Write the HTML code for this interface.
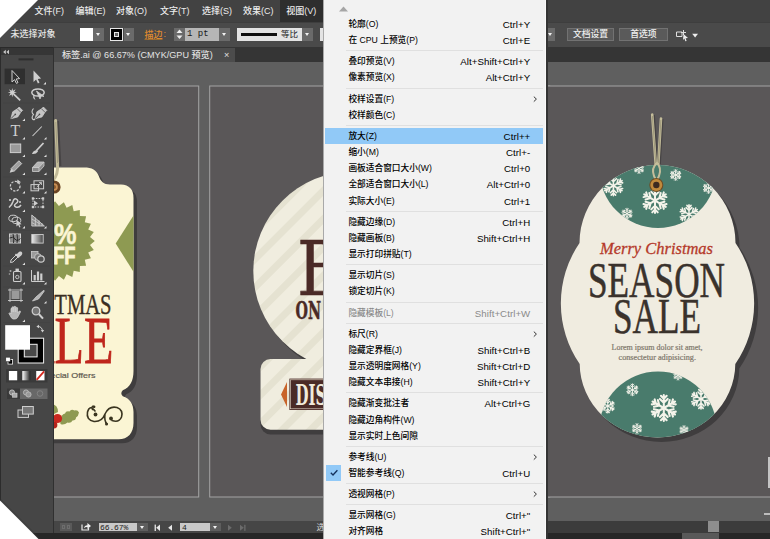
<!DOCTYPE html>
<html lang="zh-CN">
<head>
<meta charset="utf-8">
<title>Illustrator - 视图菜单</title>
<style>
*{margin:0;padding:0;box-sizing:border-box}
html,body{width:770px;height:539px;overflow:hidden;background:#5a5758}
body{position:relative;font-family:"Liberation Sans","Noto Sans CJK SC",sans-serif;font-size:9px;color:#e6e6e6}
.abs{position:absolute}
#art{position:absolute;left:0;top:0;width:770px;height:539px}
/* chrome */
#menubar{position:absolute;left:0;top:0;width:770px;height:22px;background:#424242}
#menubar span{position:absolute;top:4px;font-size:9px;line-height:14px;color:#ececec;white-space:nowrap;font-weight:500}
#menubar .sel{position:absolute;left:280px;top:0;width:43px;height:22px;background:#2e2e2e}
#ctrl{position:absolute;left:0;top:22px;width:770px;height:25px;background:#4a4a4a}
.dd{background:#6a6a6a}
.dd::after{content:"";position:absolute;left:50%;top:5px;margin-left:-2.6px;border-left:2.6px solid transparent;border-right:2.6px solid transparent;border-top:3.4px solid #f2f2f2}
.dd2{background:#5e5e5e}
.dd2::after{content:"";position:absolute;left:50%;top:3.4px;margin-left:-2.8px;border-left:2.8px solid transparent;border-right:2.8px solid transparent;border-top:3.6px solid #f4f4f4}
.btn{background:#5a5a5a;border:1px solid #727272;color:#f0f0f0;font-size:8.8px;line-height:10.5px;text-align:center;white-space:nowrap;font-weight:500}
#tabbar{position:absolute;left:0;top:47px;width:770px;height:15px;background:#353535}
#tab{position:absolute;left:54px;top:1px;width:180.5px;height:14px;background:#4c4c4c;font-size:9.1px;line-height:15px;color:#e4e4e4;white-space:nowrap;font-weight:500}
#tools{position:absolute;left:0;top:47px;width:54.4px;height:486px;background:#464646;border-right:1.6px solid #303030}
#toolhead{position:absolute;left:0;top:0;width:52.8px;height:8px;background:#363636}
#status{position:absolute;left:54.4px;top:520.5px;width:716px;height:12px;background:#464646}
#bottom{position:absolute;left:0;top:532.5px;width:770px;height:7px;background:#272727}
/* dropdown */
#menu{position:absolute;left:322.5px;top:0;width:222.1px;height:539px;background:#f2f2f2;border-left:1px solid #a9a9a9;box-shadow:1px 0 0 #fafafa,3px 0 0 #343434;color:#000}
#menu .it{position:absolute;left:1.5px;width:218.4px;height:16.2px;font-size:8.7px;line-height:17.2px;white-space:nowrap}
#menu .it b{position:absolute;left:23.4px;top:0;font-weight:500}
#menu .it i{position:absolute;right:13.1px;top:0;font-style:normal;font-size:9.7px;letter-spacing:0.05px}
#menu .sep{position:absolute;left:22.5px;width:197.4px;height:1px;background:#e0e0e0}
#menu .dis{color:#8a8a8a}
#menu .hl{background:#91c9f7}
#menu .chk{position:absolute;left:0.5px;top:0;width:15.6px;height:16.2px;background:#91c9f7}
</style>
</head>
<body>
<svg id="art" viewBox="0 0 770 539" width="770" height="539">
<rect x="0" y="0" width="770" height="539" fill="#5f5f5f"/>
<rect x="-10.5" y="86" width="209.2" height="411" fill="#5a5758" stroke="#a4a4a4" stroke-width="1"/>
<rect x="209.7" y="86" width="340" height="411" fill="#5a5758" stroke="#a4a4a4" stroke-width="1"/>
<rect x="530.5" y="86" width="260" height="411" fill="#5a5758" stroke="#a4a4a4" stroke-width="1"/>
<defs>
<pattern id="stripe" width="20" height="20" patternUnits="userSpaceOnUse" patternTransform="rotate(-45)">
<rect x="0" y="0" width="20" height="20" fill="#f0eddf"/><rect x="0" y="0" width="20" height="7" fill="#e5e2d1"/>
</pattern>
<g id="flake" stroke="#f4f3ea" stroke-width="1.6" stroke-linecap="round" fill="none">
<g id="arm"><path d="M0 0 V-10 M0 -4 L-3 -7 M0 -4 L3 -7 M0 -7 L-2.2 -9.4 M0 -7 L2.2 -9.4"/></g>
<use href="#arm" transform="rotate(60)"/><use href="#arm" transform="rotate(120)"/><use href="#arm" transform="rotate(180)"/><use href="#arm" transform="rotate(240)"/><use href="#arm" transform="rotate(300)"/>
</g>
<clipPath id="gtop"><circle cx="657.5" cy="243" r="78"/></clipPath>
<clipPath id="gtop2"><circle cx="658" cy="169.5" r="58.5"/></clipPath>
<clipPath id="gbot"><ellipse cx="657.5" cy="363.5" rx="78" ry="74"/></clipPath>
<clipPath id="gbot2"><circle cx="658" cy="430.5" r="59"/></clipPath>
</defs>
<path d="M40 167.5 H84 C92 167.5 96.5 170 98.8 176 C100.8 181.5 103.5 184.5 110 184.5 H121 Q133.5 185 133.5 198 V371 C133.5 381 130 387.5 122.8 390.3 Q119.8 393.3 122.8 396.2 C130 398.5 133.5 404 133.5 412 V423 C133.5 433 128 439.3 118.5 439.3 H40 Z" fill="#3f3d3e" transform="translate(3.5,4)"/>
<path d="M40 167.5 H84 C92 167.5 96.5 170 98.8 176 C100.8 181.5 103.5 184.5 110 184.5 H121 Q133.5 185 133.5 198 V371 C133.5 381 130 387.5 122.8 390.3 Q119.8 393.3 122.8 396.2 C130 398.5 133.5 404 133.5 412 V423 C133.5 433 128 439.3 118.5 439.3 H40 Z" fill="#fbf5d4"/>
<path d="M58 121 L60.4 166" stroke="#474445" stroke-width="2" fill="none"/>
<path d="M55.6 120.5 L57.4 163 Q58.7 175 52.5 181" stroke="#c2bb98" stroke-width="3" fill="none" stroke-linecap="round"/>
<path d="M55.8 122 L57.6 163" stroke="#9a947a" stroke-width="0.8" fill="none"/>
<circle cx="54" cy="187" r="6.6" fill="#6b4423"/><circle cx="54" cy="187" r="3.8" fill="#c98f55"/><circle cx="54" cy="187" r="2" fill="#8a5a2c"/>
<polygon points="94.8,241.0 90.0,244.9 93.8,249.9 88.2,252.6 90.9,258.3 84.8,259.7 86.1,265.8 79.9,265.9 79.8,272.1 73.7,270.8 72.3,276.9 66.6,274.2 63.9,279.8 58.9,276.0 55.0,280.8 51.1,276.0 46.1,279.8 43.4,274.2 37.7,276.9 36.3,270.8 30.2,272.1 30.1,265.9 23.9,265.8 25.2,259.7 19.1,258.3 21.8,252.6 16.2,249.9 20.0,244.9 15.2,241.0 20.0,237.1 16.2,232.1 21.8,229.4 19.1,223.7 25.2,222.3 23.9,216.2 30.1,216.1 30.2,209.9 36.3,211.2 37.7,205.1 43.4,207.8 46.1,202.2 51.1,206.0 55.0,201.2 58.9,206.0 63.9,202.2 66.6,207.8 72.3,205.1 73.7,211.2 79.8,209.9 79.9,216.1 86.1,216.2 84.8,222.3 90.9,223.7 88.2,229.4 93.8,232.1 90.0,237.1" fill="#8e9a52"/>
<polygon points="133.5,215.5 115.7,243.6 133.5,271.7" fill="#8e9a52"/>
<text x="54" y="243.8" font-family="Liberation Sans, sans-serif" font-weight="bold" font-size="29" fill="#fbf5d4" stroke="#fbf5d4" stroke-width="0.5" textLength="22.5" lengthAdjust="spacingAndGlyphs">%</text>
<text x="39" y="263.5" font-family="Liberation Sans, sans-serif" font-weight="bold" font-size="24.5" fill="#fbf5d4" stroke="#fbf5d4" stroke-width="0.9" textLength="36.5" lengthAdjust="spacingAndGlyphs">OFF</text>
<text x="42.8" y="314.3" font-family="Liberation Serif, serif" font-size="28.4" fill="#3a2e22" stroke="#3a2e22" stroke-width="0.35" textLength="68.8" lengthAdjust="spacingAndGlyphs">STMAS</text>
<text x="19.7" y="363.4" font-family="Liberation Serif, serif" font-size="68" fill="#bf261c" stroke="#bf261c" stroke-width="0.8" textLength="93.7" lengthAdjust="spacingAndGlyphs">ALE</text>
<text x="39.5" y="377.5" font-family="Liberation Sans, sans-serif" font-size="8" fill="#5f5a50" stroke="#5f5a50" stroke-width="0.2" textLength="56" lengthAdjust="spacingAndGlyphs">Special Offers</text>
<path d="M60 421 Q61 414 65 413.5 Q66 410.5 69.5 411.5 Q71 408.8 74.5 410.5 Q77.5 409.5 79 412.5 Q78.5 416 76 417.5 Q76 420.5 72.5 420.5 Q71 423.5 67.5 422.5 Q64 425.5 60.5 424 Z" fill="#8e9a52"/>
<path d="M52 404 Q58 405 58 412 L54 414 Z" fill="#8e9a52"/>
<circle cx="57.5" cy="418.5" r="4.6" fill="#c9281e"/><circle cx="54" cy="425" r="3.4" fill="#b5231a"/>
<path d="M94.5 407 Q91 405 92.5 409.5 M95 411 Q90 404 87.5 412 Q86 420 94 421.5 Q102 422 105 414 Q109 405.5 117 407.5 Q123.5 410 121.5 417 Q119 423 112 420.5 M105 414 Q104 421 107 424" fill="none" stroke="#3a3520" stroke-width="1.6" stroke-linecap="round"/>
<circle cx="95.5" cy="414.5" r="1.9" fill="#3a3520"/><circle cx="111" cy="418.5" r="1.9" fill="#3a3520"/><circle cx="106.5" cy="424" r="1.5" fill="#3a3520"/><circle cx="94" cy="406.8" r="1.3" fill="#3a3520"/>
<circle cx="356" cy="275" r="99.5" fill="#3f3d3e"/>
<rect x="260.5" y="363" width="200" height="71.5" rx="10" fill="#3f3d3e"/>
<circle cx="352.8" cy="271" r="99.5" fill="url(#stripe)"/>
<rect x="260.5" y="359" width="200" height="70.8" rx="10" fill="url(#stripe)"/>
<text x="297" y="294.6" font-family="DejaVu Serif, Liberation Serif, serif" font-size="75.4" fill="#4a2a26" stroke="#4a2a26" stroke-width="0.6" textLength="49" lengthAdjust="spacingAndGlyphs">B</text>
<text x="295.5" y="318.6" font-family="DejaVu Serif, Liberation Serif, serif" font-weight="bold" font-size="24.6" fill="#4a2a26" stroke="#4a2a26" stroke-width="0.5" textLength="25.5" lengthAdjust="spacingAndGlyphs">ON</text>
<rect x="289.4" y="378.6" width="120" height="31.4" fill="#4a2a26"/>
<rect x="290.6" y="379.8" width="120" height="29" fill="none" stroke="#e9e2cf" stroke-width="0.6"/>
<polygon points="281,394.6 287,382 287,407" fill="#c8642a"/>
<text x="295.5" y="405" font-family="DejaVu Serif, Liberation Serif, serif" font-weight="bold" font-size="28.8" fill="#f0eadb" textLength="94" lengthAdjust="spacingAndGlyphs">DISCOUNT</text>
<path d="M657.5 165 A78 78 0 0 0 579.5 243 A107 107 0 0 0 579.7 364 A78 74 0 0 0 657.5 437.5 A78 74 0 0 0 735.3 364 A107 107 0 0 0 735.5 243 A78 78 0 0 0 657.5 165 Z" fill="#3f3d3e" transform="translate(4,4.5)"/>
<path d="M657.5 165 A78 78 0 0 0 579.5 243 A107 107 0 0 0 579.7 364 A78 74 0 0 0 657.5 437.5 A78 74 0 0 0 735.3 364 A107 107 0 0 0 735.5 243 A78 78 0 0 0 657.5 165 Z" fill="#f0ece0"/>
<g clip-path="url(#gtop)"><g clip-path="url(#gtop2)"><rect x="560" y="150" width="200" height="100" fill="#497b6c"/>
<use href="#flake" transform="translate(639,168.6) scale(0.50)"/>
<use href="#flake" transform="translate(675.7,175) scale(0.55)"/>
<use href="#flake" transform="translate(613.4,185.7) scale(1.00)"/>
<use href="#flake" transform="translate(655,200.6) scale(1.25)"/>
<use href="#flake" transform="translate(627,213.7) scale(0.55)"/>
<use href="#flake" transform="translate(689,214.3) scale(0.95)"/>
<use href="#flake" transform="translate(708.6,188) scale(0.55)"/>
</g></g>
<g clip-path="url(#gbot)"><g clip-path="url(#gbot2)"><rect x="560" y="360" width="200" height="100" fill="#497b6c"/>
<use href="#flake" transform="translate(632.4,389.8) scale(0.60)"/>
<use href="#flake" transform="translate(663.8,408) scale(1.30)"/>
<use href="#flake" transform="translate(701,399) scale(1.00)"/>
<use href="#flake" transform="translate(607.8,406) scale(0.70)"/>
<use href="#flake" transform="translate(678,375.7) scale(0.45)"/>
<use href="#flake" transform="translate(637,428.5) scale(0.50)"/>
<use href="#flake" transform="translate(684,430) scale(0.45)"/>
</g></g>
<path d="M654 115 L657.5 164 M662.6 119 L660 164" stroke="#474445" stroke-width="1.8" fill="none"/>
<path d="M652.2 114.5 L655.7 164 M661 118.5 L658.3 164" stroke="#c4bd9a" stroke-width="2.6" fill="none" stroke-linecap="round"/>
<path d="M652.4 116 L655.8 163 M660.9 120 L658.3 163" stroke="#8f896f" stroke-width="0.7" fill="none"/>
<path d="M657 163 Q651 168 654 176 L656.5 181 L659 176 Q662 168 657 163 Z" fill="none" stroke="#c4bd9a" stroke-width="2"/>
<circle cx="656.3" cy="185" r="7" fill="#6e4a22"/><circle cx="656.3" cy="185" r="6" fill="#c08a3c"/><circle cx="656.3" cy="185" r="3.2" fill="#3c2a20"/>
<text x="600" y="254" font-family="Liberation Serif, serif" font-style="italic" font-size="17.5" fill="#b5392a" stroke="#b5392a" stroke-width="0.3" textLength="113" lengthAdjust="spacingAndGlyphs">Merry Christmas</text>
<text x="588" y="297.2" font-family="Liberation Serif, serif" font-size="50.6" fill="#3a322c" stroke="#3a322c" stroke-width="0.5" textLength="137" lengthAdjust="spacingAndGlyphs">SEASON</text>
<text x="613" y="333.3" font-family="Liberation Serif, serif" font-size="50" fill="#3a322c" stroke="#3a322c" stroke-width="0.5" textLength="88" lengthAdjust="spacingAndGlyphs">SALE</text>
<text x="611.5" y="350.3" font-family="Liberation Serif, serif" font-size="7.8" fill="#80786c" stroke="#80786c" stroke-width="0.2" textLength="91" lengthAdjust="spacingAndGlyphs">Lorem ipsum dolor sit amet,</text>
<text x="618.5" y="360.3" font-family="Liberation Serif, serif" font-size="7.8" fill="#80786c" stroke="#80786c" stroke-width="0.2" textLength="77.5" lengthAdjust="spacingAndGlyphs">consectetur adipisicing.</text>
<rect x="768" y="457" width="2" height="31" fill="#c4c4c4"/>
<rect x="764" y="513" width="6" height="2" fill="#bdbdbd"/>
</svg>

<div id="menubar">
  <div class="sel"></div>
  <span style="left:34.5px">文件(F)</span>
  <span style="left:75.5px">编辑(E)</span>
  <span style="left:116px">对象(O)</span>
  <span style="left:160px">文字(T)</span>
  <span style="left:202px">选择(S)</span>
  <span style="left:243px">效果(C)</span>
  <span style="left:286.2px">视图(V)</span>
</div>
<div id="ctrl">
<div class="abs" style="left:0;top:0;width:770px;height:1px;background:#3e3e3e"></div>
<span class="abs" style="left:10.5px;top:5.8px;font-size:9px;line-height:12px;color:#e4e4e4;font-weight:500;white-space:nowrap">未选择对象</span>
<div class="abs" style="left:80.4px;top:6.2px;width:13px;height:12.8px;background:#fff"></div>
<div class="abs dd" style="left:93.4px;top:6.2px;width:10.2px;height:12.8px"></div>
<div class="abs" style="left:110px;top:6.2px;width:12.8px;height:12.8px;background:#000;border:1px solid #e8e8e8"><div class="abs" style="left:3.2px;top:3.2px;width:4.4px;height:4.4px;border:1px solid #e8e8e8;background:#666"></div></div>
<div class="abs dd" style="left:123.6px;top:6.2px;width:10.6px;height:12.8px"></div>
<span class="abs" style="left:144.5px;top:6.5px;font-size:9px;line-height:12px;color:#e08a2e;font-weight:500;white-space:nowrap;text-decoration:underline;text-decoration-color:#9a6a30">描边</span><span class="abs" style="left:163.5px;top:6px;font-size:9px;line-height:12px;color:#e08a2e">:</span>
<div class="abs" style="left:174px;top:6.2px;width:11px;height:12.8px;background:#6a6a6a"><svg class="abs" style="left:2px;top:1.2px" width="7" height="11"><polygon points="3.5,0.5 6.5,4 0.5,4" fill="#eee"/><polygon points="0.5,6.5 6.5,6.5 3.5,10" fill="#eee"/></svg></div>
<div class="abs" style="left:185px;top:6.2px;width:34px;height:12.8px;background:#b6b6b6;color:#1a1a1a;font-family:'Liberation Mono',monospace;font-size:9px;line-height:12.5px;padding-left:2px;white-space:nowrap">1 pt</div>
<div class="abs dd" style="left:219px;top:6.2px;width:11px;height:12.8px"></div>
<div class="abs" style="left:236.6px;top:6.2px;width:65.4px;height:12.8px;background:#e4e4e4"><div class="abs" style="left:4px;top:5.2px;width:36.5px;height:2.2px;background:#111"></div><span class="abs" style="left:44.5px;top:0;font-size:8.5px;line-height:13px;color:#222;white-space:nowrap">等比</span></div>
<div class="abs dd" style="left:302px;top:6.2px;width:11px;height:12.8px"></div>
<div class="abs" style="left:319.7px;top:6.2px;width:20px;height:12.8px;background:#e4e4e4"></div>
<div class="abs dd" style="left:545.5px;top:6.2px;width:9.6px;height:12.8px"></div>
<div class="abs btn" style="left:567px;top:6.2px;width:47px;height:12.8px">文档设置</div>
<div class="abs btn" style="left:619px;top:6.2px;width:48.8px;height:12.8px">首选项</div>
<svg class="abs" style="left:675px;top:6.5px" width="26" height="13"><path d="M1.5 3 H7 V7.5 H1.5 Z" fill="none" stroke="#ddd" stroke-width="1"/><path d="M8.5 1 V6 M6 3.5 H11" stroke="#ddd" stroke-width="1" fill="none"/><polygon points="8.5,5 13,9 10.6,9.2 11.6,12 10.4,12.3 9.4,9.6 8,11" fill="#eee"/><polygon points="17.2,4.8 23,4.8 20.1,8.4" fill="#eee"/></svg>

</div>
<div id="tabbar"><div id="tab"><span class="abs" style="left:8px;top:0">标签.ai @ 66.67% (CMYK/GPU 预览)</span><span class="abs" style="left:170px;top:0">×</span></div></div>
<div id="tools"><div id="toolhead"></div><div class="abs" style="left:0;top:0;width:1px;height:486px;background:#2c2c2c"></div><div class="abs" style="left:0;top:0;width:52.8px;height:1.2px;background:#2a2a2a"></div>
<svg class="abs" style="left:0;top:0" width="54" height="473" viewBox="0 47 54 473">
<polygon points="3.2,52 5.8,49.8 5.8,54.2" fill="#c8c8c8"/><polygon points="6.4,52 9,49.8 9,54.2" fill="#c8c8c8"/>
<rect x="18.5" y="58.4" width="15" height="2" fill="#2e2e2e"/>
<rect x="4.6" y="68.6" width="20.4" height="15.6" fill="#2f2f2f"/>
<path d="M12 70.5 V82 L14.6 79.6 L16.4 83.4 L18 82.6 L16.2 79 L19.6 78.6 Z" fill="#2f2f2f" stroke="#cecece" stroke-width="1"/>
<path d="M33.5 70.5 V82 L36.1 79.6 L37.9 83.4 L39.5 82.6 L37.7 79 L41.1 78.6 Z" fill="#cecece"/>
<polygon points="46,81.9 46,84.5 43.4,84.5" fill="#e0e0e0"/>
<path d="M14 94.3 L20.2 100.4" stroke="#cecece" stroke-width="1.7" fill="none"/><polygon points="12.3,88.0 13.0,90.8 15.6,89.3 14.1,91.9 16.9,92.6 14.1,93.3 15.6,95.9 13.0,94.4 12.3,97.2 11.6,94.4 9.0,95.9 10.5,93.3 7.7,92.6 10.5,91.9 9.0,89.3 11.6,90.8" fill="#cecece"/>
<ellipse cx="38" cy="92.5" rx="6.2" ry="3.6" fill="none" stroke="#cecece" stroke-width="1.5"/><path d="M34 95 Q32.5 98 35 99.5 M36.5 91 L40 99 L41.2 96 L44 96.4 Z" fill="#cecece" stroke="#cecece" stroke-width="0.8"/>
<rect x="3" y="102.5" width="47" height="1" fill="#434343"/>
<g transform="translate(15.8,113.8) rotate(45)"><path d="M-2.4 -7.2 H2.4 V-4.6 L3.6 0.8 L0 7 L-3.6 0.8 L-2.4 -4.6 Z" fill="#c4c4c4" stroke="#cecece" stroke-width="0.7"/><path d="M-2.4 -4.6 H2.4" stroke="#555" stroke-width="0.8"/><path d="M0 7 V1.6" stroke="#4a4a4a" stroke-width="0.9"/><circle cx="0" cy="0.8" r="0.9" fill="#4a4a4a"/></g>
<polygon points="25,118.4 25,121 22.4,121" fill="#e0e0e0"/>
<g transform="translate(40,113.8) rotate(45)"><path d="M-2.4 -7.2 H2.4 V-4.6 L3.6 0.8 L0 7 L-3.6 0.8 L-2.4 -4.6 Z" fill="#c4c4c4" stroke="#cecece" stroke-width="0.7"/><path d="M-2.4 -4.6 H2.4" stroke="#555" stroke-width="0.8"/><path d="M0 7 V1.6" stroke="#4a4a4a" stroke-width="0.9"/><circle cx="0" cy="0.8" r="0.9" fill="#4a4a4a"/></g>
<path d="M33.5 108.5 Q30.5 112 33.5 114.5 Q31 117.5 33 119.5 Q34 120 35 119" fill="none" stroke="#cecece" stroke-width="1.1"/>
<text x="10.6" y="136.4" font-family="Liberation Serif, serif" font-size="15.8" fill="#cecece">T</text>
<polygon points="25,136.9 25,139.5 22.4,139.5" fill="#e0e0e0"/>
<path d="M32.5 136 L41.8 126.5" stroke="#cecece" stroke-width="1.05" fill="none"/>
<polygon points="46.5,136.9 46.5,139.5 43.9,139.5" fill="#e0e0e0"/>
<rect x="10.3" y="144" width="10.4" height="8.6" fill="#9a9a9a" stroke="#cecece" stroke-width="1"/>
<polygon points="25,154.4 25,157 22.4,157" fill="#e0e0e0"/>
<path d="M43.5 143 L36.5 150.5" stroke="#cecece" stroke-width="1.8" fill="none"/><path d="M36.8 150 Q33 150.5 32 154 Q36 154.5 38 151.5 Z" fill="#cecece"/>
<polygon points="46.5,154.4 46.5,157 43.9,157" fill="#e0e0e0"/>
<g transform="translate(15,167.5) rotate(45)"><rect x="-2" y="-7.5" width="4" height="11" fill="#a0a0a0" stroke="#cecece" stroke-width="0.9"/><polygon points="-2,3.5 2,3.5 0,7.5" fill="#cecece"/></g>
<polygon points="25,172.4 25,175 22.4,175" fill="#e0e0e0"/>
<path d="M32.5 167.5 L37.5 162 H44 L39 167.5 Z" fill="#b5b5b5" stroke="#cecece" stroke-width="0.8"/><path d="M32.5 167.5 H39 V171.5 H32.5 Z M39 167.5 L44 162 V166 L39 171.5" fill="#8a8a8a" stroke="#cecece" stroke-width="0.8"/>
<polygon points="46.5,172.4 46.5,175 43.9,175" fill="#e0e0e0"/>
<rect x="3" y="176.5" width="47" height="1" fill="#434343"/>
<circle cx="15.2" cy="186.2" r="4.8" fill="none" stroke="#cecece" stroke-width="1.3" stroke-dasharray="2.2 1.4"/><polygon points="17.4,179.6 21,182.2 17,183.6" fill="#cecece"/>
<polygon points="25,190.9 25,193.5 22.4,193.5" fill="#e0e0e0"/>
<rect x="31" y="184.6" width="7.6" height="6.2" fill="none" stroke="#cecece" stroke-width="1"/><rect x="34" y="180.8" width="9.6" height="8" fill="none" stroke="#cecece" stroke-width="1"/><path d="M36.8 187 L41.4 182.6 M41.4 182.6 H39 M41.4 182.6 V185" stroke="#cecece" stroke-width="0.9" fill="none"/>
<polygon points="46.5,190.9 46.5,193.5 43.9,193.5" fill="#e0e0e0"/>
<path d="M9 207.5 Q12 205 13 201.5 Q14 197.5 17 199.5 Q19 201.5 16 203.5 Q13 205.5 16 207 Q19 208 21 205" fill="none" stroke="#cecece" stroke-width="1.5"/><circle cx="10" cy="200" r="1.1" fill="#cecece"/><circle cx="20" cy="202" r="1" fill="#cecece"/>
<polygon points="25,209.4 25,212 22.4,212" fill="#e0e0e0"/>
<rect x="33" y="198.5" width="10" height="8.5" fill="none" stroke="#cecece" stroke-width="1" stroke-dasharray="1.6 1.2"/><rect x="31.8" y="197.3" width="2.4" height="2.4" fill="#cecece"/><rect x="41.8" y="197.3" width="2.4" height="2.4" fill="#cecece"/><rect x="31.8" y="205.8" width="2.4" height="2.4" fill="#cecece"/><rect x="41.8" y="205.8" width="2.4" height="2.4" fill="#cecece"/><polygon points="34,200.5 34,206 38,203.2" fill="#cecece"/>
<ellipse cx="13.2" cy="218.4" rx="4.4" ry="3.2" fill="none" stroke="#cecece" stroke-width="1"/><ellipse cx="16.4" cy="220.4" rx="4.4" ry="3.2" fill="none" stroke="#cecece" stroke-width="1"/><polygon points="16.4,219.6 16.4,226.6 18.2,225 19.4,227.4 20.5,226.9 19.3,224.5 21.6,224.2" fill="#cecece"/>
<polygon points="25,225.9 25,228.5 22.4,228.5" fill="#e0e0e0"/>
<path d="M31.8 215 V226 H44.4 Z" fill="#8a8a8a" stroke="#cecece" stroke-width="0.9"/><path d="M31.8 219 L40 224 M31.8 222.6 L36.6 225.2 M35.4 217.6 V226 M39 220.4 V226 M42 223.2 V226" fill="none" stroke="#cecece" stroke-width="0.8"/>
<polygon points="46.5,225.9 46.5,228.5 43.9,228.5" fill="#e0e0e0"/>
<rect x="3" y="230" width="47" height="1" fill="#434343"/>
<rect x="9.5" y="234" width="11" height="9" fill="#8a8a8a" stroke="#cecece" stroke-width="1"/><path d="M9.5 238 Q13 236 15 239 T20.5 238.5 M13 234 Q14.5 238 13.5 243 M17 234 Q18 239 17 243" fill="none" stroke="#222" stroke-width="0.9"/>
<defs><linearGradient id="tg"><stop offset="0" stop-color="#eee"/><stop offset="1" stop-color="#444"/></linearGradient><linearGradient id="tg2"><stop offset="0" stop-color="#fff"/><stop offset="1" stop-color="#222"/></linearGradient></defs><rect x="31.8" y="234.5" width="11.4" height="8.6" fill="url(#tg)" stroke="#cecece" stroke-width="0.9"/>
<path d="M10.5 262.5 L11 260 L16 255 L18 257 L13 262 Z" fill="none" stroke="#cecece" stroke-width="1"/><path d="M15.5 254 L19 257.5 M16.8 255.2 L19.6 252.4 Q21 251.8 21.4 253 Q21.6 254 20.8 254.8 L18 257" stroke="#cecece" stroke-width="1.6" fill="#cecece"/>
<polygon points="25,262.4 25,265 22.4,265" fill="#e0e0e0"/>
<rect x="31.5" y="251.5" width="6.5" height="6.5" fill="#9a9a9a" stroke="#cecece" stroke-width="0.8"/><circle cx="38" cy="257" r="3.4" fill="#777" stroke="#cecece" stroke-width="0.8"/><circle cx="41" cy="259" r="3.2" fill="#535353" stroke="#cecece" stroke-width="1.2"/>
<rect x="3" y="265.5" width="47" height="1" fill="#434343"/>
<rect x="13.5" y="271.5" width="7.5" height="10" rx="1" fill="none" stroke="#cecece" stroke-width="1.1"/><rect x="15.5" y="268.6" width="3.4" height="3" fill="#cecece"/><circle cx="17.3" cy="277" r="1.7" fill="none" stroke="#cecece" stroke-width="0.9"/><circle cx="10.5" cy="271" r="1" fill="#aaa"/><circle cx="9.5" cy="274" r="0.8" fill="#aaa"/>
<polygon points="25,281.9 25,284.5 22.4,284.5" fill="#e0e0e0"/>
<path d="M31.5 270 V281.5 H44.5" fill="none" stroke="#cecece" stroke-width="1"/><rect x="33.6" y="275" width="2.2" height="5.5" fill="#cecece"/><rect x="36.9" y="271.5" width="2.2" height="9" fill="#cecece"/><rect x="40.2" y="273.5" width="2.2" height="7" fill="#cecece"/>
<polygon points="46.5,281.9 46.5,284.5 43.9,284.5" fill="#e0e0e0"/>
<rect x="3" y="286.5" width="47" height="1" fill="#434343"/>
<rect x="11.5" y="291" width="8" height="8" fill="#9a9a9a"/><path d="M10 288.5 V302 M21 288.5 V302 M8 290 H23 M8 300.5 H23" stroke="#cecece" stroke-width="0.9" fill="none"/>
<path d="M32.5 301 L36 297 L43.5 290.5 Q44.5 290 44 291.5 L38.5 299 Z" fill="#b5b5b5" stroke="#cecece" stroke-width="0.8"/>
<polygon points="46.5,300.9 46.5,303.5 43.9,303.5" fill="#e0e0e0"/>
<path d="M11 314 V309 Q11 308 12 308 V312 V307.2 Q12.8 306.2 13.8 307.2 V312 V306.8 Q14.8 305.8 15.8 306.8 V312 V307.8 Q16.8 307 17.6 307.8 V313 L19.4 311 Q20.6 310.6 20.4 312 L17.8 317 Q16.8 319 15 319 H13.2 Q11.6 318.6 11 317 L9 313.6 Q9.4 312.4 10.4 313 Z" fill="#b5b5b5" stroke="#cecece" stroke-width="0.8"/>
<polygon points="25,319.4 25,322 22.4,322" fill="#e0e0e0"/>
<circle cx="36" cy="311" r="3.8" fill="#777" stroke="#cecece" stroke-width="1.3"/><path d="M38.8 314 L43 318.6" stroke="#cecece" stroke-width="2" fill="none"/>
<rect x="3" y="322" width="47" height="1" fill="#434343"/>
<rect x="18.2" y="338.2" width="25.4" height="24.8" fill="#000" stroke="#f0f0f0" stroke-width="1"/><rect x="24.3" y="344.3" width="12.8" height="12.6" fill="#484848" stroke="#f0f0f0" stroke-width="1"/>
<rect x="5.2" y="325.2" width="24.8" height="24.5" fill="#fff"/>
<path d="M38 326.5 Q42 326.5 42.5 331" fill="none" stroke="#cecece" stroke-width="1"/><polygon points="36.4,326.5 39,324.8 39,328.2" fill="#cecece"/><polygon points="42.5,332.6 40.8,330 44.2,330" fill="#cecece"/>
<rect x="8" y="359.5" width="4.6" height="4.6" fill="#000" stroke="#eee" stroke-width="0.8"/><rect x="5.8" y="357.2" width="4.4" height="4.4" fill="#fff" stroke="#222" stroke-width="0.5"/>
<rect x="6" y="369" width="41.5" height="13.5" fill="#3a3a3a"/>
<rect x="8.9" y="371" width="8.3" height="9.3" fill="#fff"/><rect x="22.3" y="371" width="8" height="9.3" fill="url(#tg2)"/><rect x="36.2" y="371" width="8.3" height="9.3" fill="#fff"/><path d="M36.6 379.9 L44.1 371.4" stroke="#d4281e" stroke-width="1.8"/>
<rect x="7" y="388.5" width="13" height="10.5" fill="#3a3a3a"/><rect x="20" y="388.5" width="27.5" height="10.5" fill="#686868"/>
<circle cx="12" cy="392.5" r="2.6" fill="#888" stroke="#cecece" stroke-width="0.8"/><rect x="12.6" y="393.2" width="4.4" height="4" fill="#aaa" stroke="#cecece" stroke-width="0.7"/>
<circle cx="26" cy="392.5" r="2.6" fill="#888" stroke="#c0c0c0" stroke-width="0.8"/><circle cx="28.5" cy="394.5" r="2.6" fill="#999" stroke="#c0c0c0" stroke-width="0.8"/>
<circle cx="40" cy="393.5" r="2.8" fill="none" stroke="#888" stroke-width="0.8"/>
<rect x="18" y="410" width="10.5" height="7.4" fill="#535353" stroke="#cecece" stroke-width="1"/><rect x="22.5" y="406.5" width="10.8" height="7.6" fill="#777" stroke="#cecece" stroke-width="1"/>
</svg>
</div>
<div id="status">
<div class="abs" style="left:5.6px;top:2.2px;width:12.5px;height:8px;background:#5a5a5a"><div class="abs" style="left:2px;top:2px;width:3.4px;height:4px;border:1px solid #6e6e6e"></div><div class="abs" style="left:7px;top:2px;width:3.4px;height:4px;border:1px solid #6e6e6e"></div></div>
<svg class="abs" style="left:26.6px;top:1.6px" width="11" height="9"><path d="M1 2.5 V8 H7.5 V6" fill="none" stroke="#e6e6e6" stroke-width="1.2"/><path d="M3 6.2 Q3.4 3.2 6.4 3.2 V1 L10 4 L6.4 7 V5 Q4.4 4.8 3 6.2 Z" fill="#f0f0f0"/></svg>
<div class="abs" style="left:44.6px;top:2.2px;width:38px;height:8.8px;background:#c9c9c9;color:#1c1c1c;font-family:'Liberation Mono',monospace;font-size:8px;line-height:9.4px;padding-left:1px;white-space:nowrap;letter-spacing:-0.1px">66.67%</div>
<div class="abs dd2" style="left:82.6px;top:2.2px;width:11px;height:8.8px"></div>
<svg class="abs" style="left:100px;top:3px" width="24" height="8"><rect x="0.6" y="0.6" width="1.3" height="6.4" fill="#e8e8e8"/><polygon points="6,0.6 6,7 2.2,3.8" fill="#e8e8e8"/><polygon points="18,0.8 18,6.8 14.2,3.8" fill="#e8e8e8"/></svg>
<div class="abs" style="left:125.6px;top:2.2px;width:30px;height:8.8px;background:#c9c9c9;color:#1c1c1c;font-family:'Liberation Mono',monospace;font-size:8px;line-height:9.4px;padding-left:2px">4</div>
<div class="abs dd2" style="left:155.6px;top:2.2px;width:11.5px;height:8.8px"></div>
<svg class="abs" style="left:173px;top:3px" width="24" height="8"><polygon points="1,0.8 1,6.8 4.8,3.8" fill="#6c6c6c"/><polygon points="13,0.8 13,6.8 16.8,3.8" fill="#6c6c6c"/><rect x="17.2" y="0.8" width="1.3" height="6" fill="#6c6c6c"/></svg>
<span class="abs" style="left:262px;top:0;font-size:8.5px;line-height:12px;color:#ddd;white-space:nowrap">选择</span>
<div class="abs" style="left:490px;top:0;width:226px;height:12.2px;background:#3c3c3c"></div>
<div class="abs" style="left:653.6px;top:0.3px;width:11px;height:11.7px;background:#8e8e8e"></div>

</div>
<div id="bottom"><div class="abs" style="left:682px;top:0;width:37px;height:7px;background:#595959"></div></div>

<div id="menu">
<svg class="abs" style="left:15.6px;top:4.6px" width="10" height="8"><polygon points="0,6.4 4.5,1.6 9,6.4" fill="#a6a6a6"/></svg>
<div class="it" style="top:15.9px"><b>轮廓(O)</b><i>Ctrl+Y</i></div>
<div class="it" style="top:32.1px"><b>在 CPU 上预览(P)</b><i>Ctrl+E</i></div>
<div class="sep" style="top:50.3px"></div>
<div class="it" style="top:53.2px"><b>叠印预览(V)</b><i>Alt+Shift+Ctrl+Y</i></div>
<div class="it" style="top:69.4px"><b>像素预览(X)</b><i>Alt+Ctrl+Y</i></div>
<div class="sep" style="top:87.6px"></div>
<div class="it" style="top:90.5px"><b>校样设置(F)</b><svg class="abs" style="left:208.3px;top:5.3px" width="5" height="7"><path d="M0.8 0.6 L3.4 3.1 L0.8 5.6" fill="none" stroke="#333" stroke-width="1"/></svg></div>
<div class="it" style="top:106.7px"><b>校样颜色(C)</b></div>
<div class="sep" style="top:124.9px"></div>
<div class="it hl" style="top:127.8px"><b>放大(Z)</b><i>Ctrl++</i></div>
<div class="it" style="top:144.0px"><b>缩小(M)</b><i>Ctrl+-</i></div>
<div class="it" style="top:160.2px"><b>画板适合窗口大小(W)</b><i>Ctrl+0</i></div>
<div class="it" style="top:176.4px"><b>全部适合窗口大小(L)</b><i>Alt+Ctrl+0</i></div>
<div class="it" style="top:192.6px"><b>实际大小(E)</b><i>Ctrl+1</i></div>
<div class="sep" style="top:210.7px"></div>
<div class="it" style="top:213.7px"><b>隐藏边缘(D)</b><i>Ctrl+H</i></div>
<div class="it" style="top:229.9px"><b>隐藏画板(B)</b><i>Shift+Ctrl+H</i></div>
<div class="it" style="top:246.1px"><b>显示打印拼贴(T)</b></div>
<div class="sep" style="top:264.2px"></div>
<div class="it" style="top:267.2px"><b>显示切片(S)</b></div>
<div class="it" style="top:283.4px"><b>锁定切片(K)</b></div>
<div class="sep" style="top:301.5px"></div>
<div class="it dis" style="top:304.5px"><b>隐藏模板(L)</b><i>Shift+Ctrl+W</i></div>
<div class="sep" style="top:322.6px"></div>
<div class="it" style="top:325.6px"><b>标尺(R)</b><svg class="abs" style="left:208.3px;top:5.3px" width="5" height="7"><path d="M0.8 0.6 L3.4 3.1 L0.8 5.6" fill="none" stroke="#333" stroke-width="1"/></svg></div>
<div class="it" style="top:341.8px"><b>隐藏定界框(J)</b><i>Shift+Ctrl+B</i></div>
<div class="it" style="top:358.0px"><b>显示透明度网格(Y)</b><i>Shift+Ctrl+D</i></div>
<div class="it" style="top:374.2px"><b>隐藏文本串接(H)</b><i>Shift+Ctrl+Y</i></div>
<div class="sep" style="top:392.3px"></div>
<div class="it" style="top:395.3px"><b>隐藏渐变批注者</b><i>Alt+Ctrl+G</i></div>
<div class="it" style="top:411.5px"><b>隐藏边角构件(W)</b></div>
<div class="it" style="top:427.7px"><b>显示实时上色间隙</b></div>
<div class="sep" style="top:445.8px"></div>
<div class="it" style="top:448.8px"><b>参考线(U)</b><svg class="abs" style="left:208.3px;top:5.3px" width="5" height="7"><path d="M0.8 0.6 L3.4 3.1 L0.8 5.6" fill="none" stroke="#333" stroke-width="1"/></svg></div>
<div class="it" style="top:465.0px"><em class="chk"></em><svg class="abs" style="left:4.6px;top:4px" width="9" height="8"><path d="M0.8 3.8 L3 6 L7.4 1.2" fill="none" stroke="#14305c" stroke-width="1.3"/></svg><b>智能参考线(Q)</b><i>Ctrl+U</i></div>
<div class="sep" style="top:483.1px"></div>
<div class="it" style="top:486.1px"><b>透视网格(P)</b><svg class="abs" style="left:208.3px;top:5.3px" width="5" height="7"><path d="M0.8 0.6 L3.4 3.1 L0.8 5.6" fill="none" stroke="#333" stroke-width="1"/></svg></div>
<div class="sep" style="top:504.2px"></div>
<div class="it" style="top:507.2px"><b>显示网格(G)</b><i>Ctrl+&quot;</i></div>
<div class="it" style="top:523.4px"><b>对齐网格</b><i>Shift+Ctrl+&quot;</i></div>
</div>

<svg class="abs" style="left:0;top:0" width="40" height="40"><polygon points="0,0 38,0 0,38" fill="#fff"/></svg>
<svg class="abs" style="left:0;top:495px" width="44" height="44"><polygon points="0,3 41,44 0,44" fill="#333" opacity="0.35"/><polygon points="0,5.5 38.5,44 0,44" fill="#fff"/></svg>
</body>
</html>
